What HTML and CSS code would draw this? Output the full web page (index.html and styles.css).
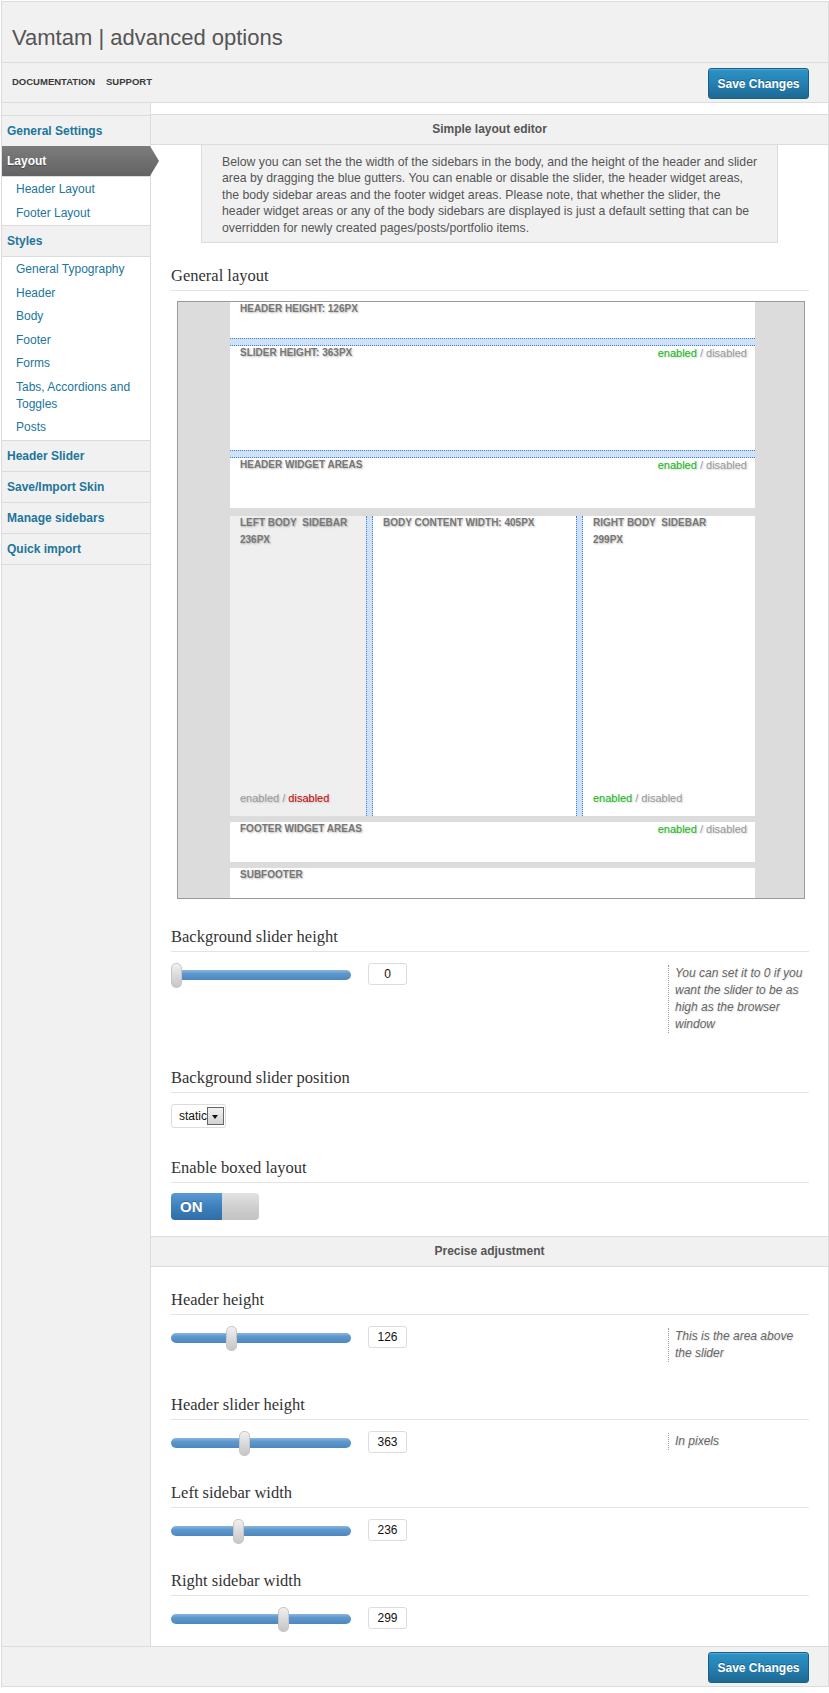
FILE: index.html
```html
<!DOCTYPE html>
<html lang="en">
<head>
<meta charset="utf-8">
<title>Vamtam | advanced options</title>
<link rel="stylesheet" href="styles.css">
</head>
<body>
<div class="wrap">
  <header class="page-head">
    <h1 class="page-title">Vamtam | advanced options</h1>
  </header>
  <div class="toolbar">
    <nav class="toolbar-links">
      <a href="#">Documentation</a>
      <a href="#">Support</a>
    </nav>
    <button class="btn-save" type="button">Save Changes</button>
  </div>

  <div class="main">
    <aside class="sidebar">
      <ul class="menu">
        <li><a class="menu-head" href="#">General Settings</a></li>
        <li>
          <a class="menu-head active" href="#">Layout</a>
          <ul class="submenu">
            <li><a href="#">Header Layout</a></li>
            <li><a href="#">Footer Layout</a></li>
          </ul>
        </li>
        <li>
          <a class="menu-head" href="#">Styles</a>
          <ul class="submenu">
            <li><a href="#">General Typography</a></li>
            <li><a href="#">Header</a></li>
            <li><a href="#">Body</a></li>
            <li><a href="#">Footer</a></li>
            <li><a href="#">Forms</a></li>
            <li><a href="#">Tabs, Accordions and Toggles</a></li>
            <li><a href="#">Posts</a></li>
          </ul>
        </li>
        <li><a class="menu-head" href="#">Header Slider</a></li>
        <li><a class="menu-head" href="#">Save/Import Skin</a></li>
        <li><a class="menu-head" href="#">Manage sidebars</a></li>
        <li><a class="menu-head" href="#">Quick import</a></li>
      </ul>
    </aside>

    <section class="content">
      <div class="bar">Simple layout editor</div>
      <div class="intro">Below you can set the the width of the sidebars in the body, and the height of the header and slider area by dragging the blue gutters. You can enable or disable the slider, the header widget areas, the body sidebar areas and the footer widget areas. Please note, that whether the slider, the header widget areas or any of the body sidebars are displayed is just a default setting that can be overridden for newly created pages/posts/portfolio items.</div>

      <div class="panel">
        <div class="field field-first">
          <h3 class="field-title">General layout</h3>
          <div class="layout-box">
            <div class="lb-block lb-header">
              <span class="lb-label">Header height: 126px</span>
            </div>
            <div class="gutter-h"></div>
            <div class="lb-block lb-slider lb-split">
              <span class="lb-label">Slider height: 363px</span>
              <span class="state"><span class="on">enabled</span> / <span class="off">disabled</span></span>
            </div>
            <div class="gutter-h"></div>
            <div class="lb-block lb-widgets lb-split">
              <span class="lb-label">Header widget areas</span>
              <span class="state"><span class="on">enabled</span> / <span class="off">disabled</span></span>
            </div>
            <div class="lb-body">
              <div class="lb-col lb-left is-disabled">
                <div>
                  <div class="lb-label">Left body&nbsp; sidebar</div>
                  <div class="lb-label lb-size">236px</div>
                </div>
                <span class="state state-col"><span class="off">enabled</span> / <span class="red">disabled</span></span>
              </div>
              <div class="gutter-v"></div>
              <div class="lb-col lb-center">
                <div class="lb-label">Body content width: 405px</div>
              </div>
              <div class="gutter-v"></div>
              <div class="lb-col lb-right">
                <div>
                  <div class="lb-label">Right body&nbsp; sidebar</div>
                  <div class="lb-label lb-size">299px</div>
                </div>
                <span class="state state-col"><span class="on">enabled</span> / <span class="off">disabled</span></span>
              </div>
            </div>
            <div class="lb-block lb-footer lb-split">
              <span class="lb-label">Footer widget areas</span>
              <span class="state"><span class="on">enabled</span> / <span class="off">disabled</span></span>
            </div>
            <div class="lb-block lb-subfooter">
              <span class="lb-label">Subfooter</span>
            </div>
          </div>
        </div>

        <div class="field field-after-box">
          <h3 class="field-title">Background slider height</h3>
          <div class="field-row">
            <div class="range"><div class="range-track"></div><span class="range-handle" style="left:0px"></span></div>
            <input class="range-value" type="text" value="0">
            <div class="help">You can set it to 0 if you want the slider to be as high as the browser window</div>
          </div>
        </div>

        <div class="field field-gap-lg">
          <h3 class="field-title">Background slider position</h3>
          <div class="field-row">
            <div class="select"><span class="select-text">static</span><span class="select-btn"></span></div>
          </div>
        </div>

        <div class="field">
          <h3 class="field-title">Enable boxed layout</h3>
          <div class="toggle"><span class="toggle-on">ON</span><span class="toggle-knob"></span></div>
        </div>
      </div>

      <div class="bar">Precise adjustment</div>

      <div class="panel panel-precise">
        <div class="field field-first-precise">
          <h3 class="field-title">Header height</h3>
          <div class="field-row">
            <div class="range"><div class="range-track"></div><span class="range-handle" style="left:55px"></span></div>
            <input class="range-value" type="text" value="126">
            <div class="help">This is the area above the slider</div>
          </div>
        </div>

        <div class="field">
          <h3 class="field-title">Header slider height</h3>
          <div class="field-row">
            <div class="range"><div class="range-track"></div><span class="range-handle" style="left:68px"></span></div>
            <input class="range-value" type="text" value="363">
            <div class="help">In pixels</div>
          </div>
        </div>

        <div class="field">
          <h3 class="field-title">Left sidebar width</h3>
          <div class="field-row">
            <div class="range"><div class="range-track"></div><span class="range-handle" style="left:62px"></span></div>
            <input class="range-value" type="text" value="236">
          </div>
        </div>

        <div class="field">
          <h3 class="field-title">Right sidebar width</h3>
          <div class="field-row">
            <div class="range"><div class="range-track"></div><span class="range-handle" style="left:107px"></span></div>
            <input class="range-value" type="text" value="299">
          </div>
        </div>
      </div>
    </section>
  </div>

  <footer class="page-foot">
    <button class="btn-save" type="button">Save Changes</button>
  </footer>
</div>
</body>
</html>
```

FILE: styles.css
```css
* { box-sizing: border-box; }

html, body {
  margin: 0;
  padding: 0;
  background: #fff;
}

body {
  font-family: "Liberation Sans", Arial, sans-serif;
  font-size: 12px;
  color: #555;
}

a { text-decoration: none; }

ul { list-style: none; margin: 0; padding: 0; }

.wrap {
  margin: 1px 0 0 1px;
  width: 828px;
  border: 1px solid #dcdcdc;
  background: #fff;
}

/* ---------- header ---------- */
.page-head {
  height: 61px;
  padding: 24px 10px 0;
  background: #f1f1f1;
  border-bottom: 1px solid #dcdcdc;
}

.page-title {
  margin: 0;
  font-weight: normal;
  font-size: 22px;
  line-height: 24px;
  color: #555;
}

.toolbar {
  height: 40px;
  padding: 5px 19px 0 10px;
  display: flex;
  justify-content: space-between;
  align-items: flex-start;
  background: #f1f1f1;
  border-bottom: 1px solid #dcdcdc;
}

.toolbar-links {
  display: flex;
  gap: 11px;
  padding-top: 8px;
}

.toolbar-links a {
  font-size: 9.5px;
  line-height: 11px;
  font-weight: bold;
  text-transform: uppercase;
  color: #3a3a3a;
}

.btn-save {
  width: 101px;
  height: 31px;
  padding: 0;
  border: 1px solid #1b5f86;
  border-radius: 3px;
  background: linear-gradient(to bottom, #2c93c7 0%, #2580b2 50%, #1d6993 100%);
  color: #fff;
  font-family: "Liberation Sans", Arial, sans-serif;
  font-size: 12px;
  font-weight: bold;
  text-shadow: 0 -1px 0 rgba(0, 0, 0, 0.3);
  box-shadow: inset 0 1px 0 rgba(255, 255, 255, 0.2);
  cursor: pointer;
}

/* ---------- main ---------- */
.main {
  display: flex;
  align-items: stretch;
}

.sidebar {
  flex: none;
  width: 149px;
  padding-top: 12px;
  background: #f1f1f1;
  border-right: 1px solid #dcdcdc;
}

.menu {
  border-bottom: 1px solid #dcdcdc;
}

.menu-head {
  display: block;
  height: 31px;
  padding: 0 5px;
  line-height: 30px;
  border-top: 1px solid #dcdcdc;
  background: #f1f1f1;
  font-weight: bold;
  font-size: 12px;
  color: #21759b;
}

.menu-head.active {
  position: relative;
  z-index: 2;
  height: 30px;
  margin-right: -9px;
  border-top: 0;
  background: linear-gradient(to bottom, #7c7c7c 0%, #636363 100%);
  color: #fff;
  text-shadow: 0 1px 1px rgba(0, 0, 0, 0.35);
  clip-path: polygon(0 0, calc(100% - 9px) 0, 100% 50%, calc(100% - 9px) 100%, 0 100%);
}

.submenu {
  padding: 1px 0 0;
  background: #fff;
  border-top: 1px solid #dcdcdc;
}

.submenu a {
  display: block;
  padding: 3px 8px 3.5px 14px;
  line-height: 17px;
  font-size: 12px;
  color: #21759b;
}

/* ---------- content ---------- */
.content {
  flex: 1;
  min-width: 0;
  padding: 11px 0 17px;
  background: #fff;
}

.bar {
  border-top: 1px solid #dcdcdc;
  border-bottom: 1px solid #dcdcdc;
  background: #f1f1f1;
  text-align: center;
  font-weight: bold;
  font-size: 12px;
  line-height: 29px;
  color: #555;
}

.intro {
  width: 577px;
  margin: 0 auto;
  padding: 8.5px 18px 6px 20px;
  background: #f1f1f1;
  border: 1px solid #dcdcdc;
  border-top: 0;
  font-size: 12.25px;
  line-height: 16.5px;
  color: #555;
}

.panel {
  padding: 0 19px 16px 20px;
}

.panel-precise {
  padding-bottom: 0;
}

.field { margin-top: 30px; }
.field-first { margin-top: 23px; }
.field-after-box { margin-top: 28px; }
.field-gap-lg { margin-top: 32px; }
.field-first-precise { margin-top: 23px; }

.field-title {
  margin: 0;
  padding-bottom: 4px;
  border-bottom: 1px solid #e3e3e3;
  font-family: "Liberation Serif", "Times New Roman", serif;
  font-weight: normal;
  font-size: 16.5px;
  line-height: 20px;
  color: #333;
}

/* ---------- layout editor box ---------- */
.layout-box {
  width: 628px;
  margin: 10px 0 0 6px;
  padding: 0 49px 0 52px;
  border: 1px solid #9a9a9a;
  background: #dcdcdc;
}

.lb-block {
  background: #fff;
}

.lb-split {
  display: flex;
  justify-content: space-between;
  align-items: flex-start;
  padding-right: 8px;
}

.lb-header { height: 36px; }
.lb-slider { height: 104px; }
.lb-widgets { height: 50px; }
.lb-footer { height: 40px; margin-top: 6px; }
.lb-subfooter { height: 30px; margin-top: 6px; }

.lb-label {
  display: block;
  padding-left: 10px;
  font-size: 10px;
  line-height: 14px;
  font-weight: bold;
  text-transform: uppercase;
  color: #777;
  text-shadow: 1px 1px 2px rgba(0, 0, 0, 0.28);
}

.lb-size { margin-top: 3px; }

.state {
  font-size: 11px;
  line-height: 14px;
  color: #999;
  text-shadow: 1px 1px 2px rgba(0, 0, 0, 0.2);
}

.state .on { color: #13b913; }
.state .off { color: #999; }
.state .red { color: #c40000; }

.state-col {
  padding-left: 10px;
}

.gutter-h {
  height: 8px;
  background: #cfe1f7;
  border-top: 1px dotted #3f7fcf;
  border-bottom: 1px dotted #3f7fcf;
}

.lb-body {
  display: flex;
  height: 300px;
  margin-top: 8px;
}

.lb-col {
  display: flex;
  flex-direction: column;
  justify-content: space-between;
  padding-bottom: 11px;
  background: #fff;
}

.lb-left { width: 136px; }
.lb-center { width: 203px; }
.lb-right { width: 172px; }

.lb-col.is-disabled { background: #efefef; }

.gutter-v {
  width: 7px;
  background: #cfe1f7;
  border-left: 1px dotted #3f7fcf;
  border-right: 1px dotted #3f7fcf;
}

/* ---------- fields ---------- */
.field-row {
  display: flex;
  align-items: flex-start;
  margin-top: 11px;
}

.range {
  position: relative;
  flex: none;
  width: 180px;
  height: 22px;
}

.range-track {
  margin-top: 7px;
  height: 10px;
  border-radius: 5px;
  background: linear-gradient(to bottom, #8ab7df 0%, #5f98cc 35%, #4c87c0 100%);
}

.range-handle {
  position: absolute;
  top: 0;
  width: 11px;
  height: 25px;
  border: 1px solid #c6c6c6;
  border-radius: 5px;
  background: linear-gradient(to bottom, #f0f0f0 0%, #d6d6d6 60%, #c6c6c6 100%);
}

.range-value {
  flex: none;
  width: 39px;
  height: 22px;
  margin: 0 0 0 17px;
  padding: 0;
  border: 1px solid #dcdcdc;
  border-radius: 3px;
  background: #fff;
  text-align: center;
  font-family: "Liberation Sans", Arial, sans-serif;
  font-size: 12px;
  color: #111;
}

.help {
  flex: none;
  width: 141px;
  margin: 2px 0 3px auto;
  padding-left: 6px;
  border-left: 1px dotted #9a9a9a;
  font-style: italic;
  font-size: 12px;
  line-height: 17px;
  color: #666;
  text-shadow: 1px 1px 1px rgba(0, 0, 0, 0.12);
}

.select {
  position: relative;
  width: 55px;
  height: 24px;
  border: 1px solid #dcdcdc;
  border-radius: 3px;
  background: #fff;
  overflow: hidden;
}

.select-text {
  display: block;
  padding-left: 7px;
  font-size: 12px;
  line-height: 22px;
  color: #111;
}

.select-btn {
  position: absolute;
  left: 35px;
  top: 2px;
  width: 17px;
  height: 18px;
  border: 1px solid #666;
  background: linear-gradient(to bottom, #f2f2f2 0%, #d2d2d2 100%);
}

.select-btn::after {
  content: "";
  position: absolute;
  left: 4px;
  top: 7px;
  border-top: 4px solid #111;
  border-left: 3.5px solid transparent;
  border-right: 3.5px solid transparent;
}

.toggle {
  display: flex;
  width: 88px;
  height: 27px;
  margin-top: 10px;
  border-radius: 4px;
  overflow: hidden;
}

.toggle-on {
  width: 51px;
  padding-left: 9px;
  background: linear-gradient(to bottom, #5a9ad4 0%, #3d80bd 50%, #2f6ea6 100%);
  color: #fff;
  font-weight: bold;
  font-size: 15px;
  line-height: 27px;
  text-shadow: 0 -1px 0 rgba(0, 0, 0, 0.25);
}

.toggle-knob {
  flex: 1;
  background: linear-gradient(to bottom, #e2e2e2 0%, #d0d0d0 50%, #c2c2c2 100%);
}

/* ---------- footer ---------- */
.page-foot {
  height: 40px;
  padding: 5px 19px 0;
  display: flex;
  justify-content: flex-end;
  align-items: flex-start;
  background: #f1f1f1;
  border-top: 1px solid #dcdcdc;
}
```
